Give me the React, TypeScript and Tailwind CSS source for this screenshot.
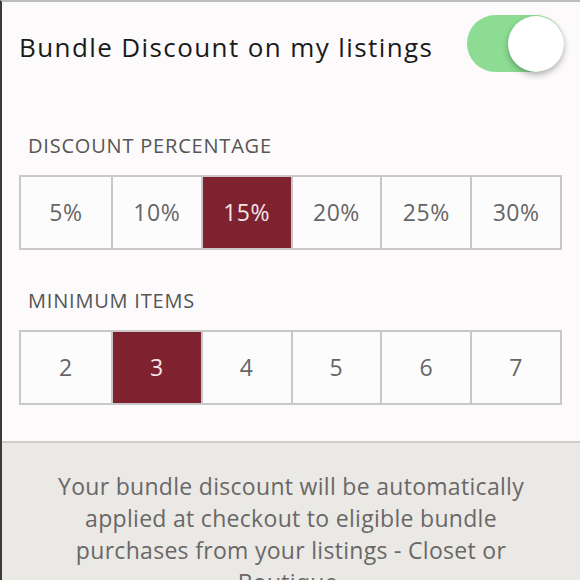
import React, { useState } from 'react';

const percents = ['5%', '10%', '15%', '20%', '25%', '30%'];
const minItems = ['2', '3', '4', '5', '6', '7'];

const OptionRow = ({
  options,
  selected,
  onSelect,
}: {
  options: string[];
  selected: string;
  onSelect: (v: string) => void;
}) => (
  <div className="ml-[17px] mr-[18px] grid h-[75px] grid-cols-6 border-2 border-[#c9c7c7]">
    {options.map((o, i) => (
      <button
        key={o}
        onClick={() => onSelect(o)}
        className={`flex items-center justify-center text-[23px] tracking-[0.5px] ${
          i > 0 ? 'border-l-2 border-[#c9c7c7]' : ''
        } ${o === selected ? 'bg-[#7e2230] text-[#f5e6e8]' : 'bg-[#fdfcfc] text-[#666]'}`}
      >
        {o}
      </button>
    ))}
  </div>
);

export default function App() {
  const [enabled, setEnabled] = useState(true);
  const [percent, setPercent] = useState('15%');
  const [items, setItems] = useState('3');

  return (
    <div
      className="flex h-[580px] w-[580px] flex-col overflow-hidden border-l-2 border-t-2 border-l-[#3a3a3a] border-t-[#bdbdbd] bg-[#fcfafa]"
      style={{ fontFamily: '"Open Sans", "Noto Sans", sans-serif' }}
    >
      <div className="flex items-center justify-between pl-[17px] pr-[16px] pt-[13px]">
        <span className="pt-[7px] text-[26px] tracking-[1.4px] text-[#1a1a1a]">Bundle Discount on my listings</span>
        <button
          onClick={() => setEnabled(!enabled)}
          className={`flex h-[57px] w-[97px] items-center rounded-full ${
            enabled ? 'justify-end bg-[#8cdc94]' : 'justify-start bg-[#e5e5e5]'
          }`}
        >
          <span className="h-[56px] w-[56px] rounded-full bg-white shadow-[0_3px_6px_rgba(0,0,0,0.3)]" />
        </button>
      </div>

      <div className="ml-[16px] mr-[16px] mt-[23px] h-[2px] bg-[#c8c6c6]" />

      <div className="pl-[26px] pt-[39px] text-[20px] leading-[24px] tracking-[0.8px] text-[#555]">DISCOUNT PERCENTAGE</div>
      <div className="mt-[17px]">
        <OptionRow options={percents} selected={percent} onSelect={setPercent} />
      </div>

      <div className="pl-[26px] pt-[39px] text-[20px] leading-[24px] tracking-[0.8px] text-[#555]">MINIMUM ITEMS</div>
      <div className="mt-[17px]">
        <OptionRow options={minItems} selected={items} onSelect={setItems} />
      </div>

      <div className="mt-[36px] flex-1 border-t-2 border-[#cfcccb] bg-[#ebe9e5] px-[44px] pt-[27px] text-center text-[23px] leading-[32px] tracking-[0.3px] text-[#6a6767]">
        Your bundle discount will be automatically applied at checkout to eligible bundle purchases from your listings - Closet or Boutique.
      </div>
    </div>
  );
}
